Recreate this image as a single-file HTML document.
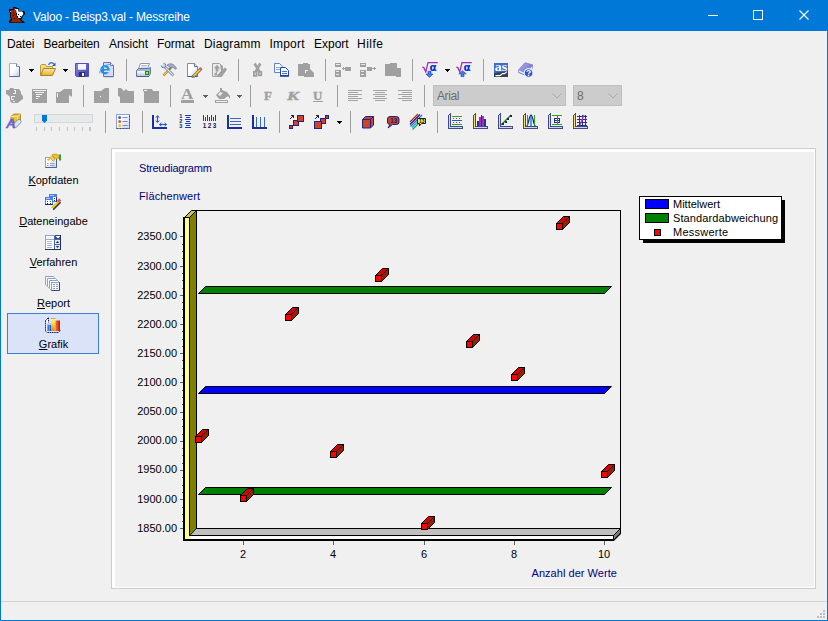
<!DOCTYPE html>
<html lang="de">
<head>
<meta charset="utf-8">
<title>Valoo - Beisp3.val - Messreihe</title>
<style>
html,body{margin:0;padding:0;}
body{width:828px;height:621px;overflow:hidden;background:#f0f0f0;font-family:"Liberation Sans",sans-serif;}
#win{position:absolute;left:0;top:0;width:828px;height:621px;background:#f0f0f0;overflow:hidden;}
#win div,#win span{position:absolute;white-space:nowrap;}
#titlebar{left:0;top:0;width:828px;height:31px;background:#0078d7;}
#title{left:33px;top:8.5px;font-size:12px;line-height:16px;color:#fff;letter-spacing:-0.17px;}
.bl{background:#0078d7;}
.menu{top:36px;font-size:12px;line-height:16px;color:#000;}
.sep{width:1px;height:22px;background:#a0a0a0;}
.side{font-size:11px;line-height:14px;color:#000;text-align:center;left:0;width:107px;}
.side u{text-decoration:underline;}
.ct{font-size:11px;line-height:14px;color:#000080;}
.yl{font-size:11px;line-height:14px;color:#000;left:120px;width:57px;text-align:right;}
.xl{font-size:11px;line-height:14px;color:#000;width:40px;text-align:center;top:547px;}
.lg{font-size:11px;line-height:14px;color:#000;left:673px;}
.combo{background:#ccc;border:1px solid #bfbfbf;box-sizing:border-box;height:21px;top:85px;}
.combo span{left:3px;top:2px;font-size:12px;line-height:16px;color:#6d6d6d;letter-spacing:-0.4px;}
#gfx{position:absolute;left:0;top:0;}
</style>
</head>
<body>
<div id="win">
<!-- title bar -->
<div id="titlebar"></div>
<div id="title">Valoo - Beisp3.val - Messreihe</div>
<!-- window borders -->
<div class="bl" style="left:0;top:0;width:1px;height:621px"></div>
<div class="bl" style="left:827px;top:0;width:1px;height:621px"></div>
<div class="bl" style="left:0;top:620px;width:828px;height:1px"></div>
<!-- menu -->
<div class="menu" style="left:7px;letter-spacing:-0.15px">Datei</div>
<div class="menu" style="left:43.5px;letter-spacing:-0.2px">Bearbeiten</div>
<div class="menu" style="left:109px;letter-spacing:-0.05px">Ansicht</div>
<div class="menu" style="left:157px;letter-spacing:-0.1px">Format</div>
<div class="menu" style="left:204px;letter-spacing:0.15px">Diagramm</div>
<div class="menu" style="left:269.5px;letter-spacing:0.2px">Import</div>
<div class="menu" style="left:314px">Export</div>
<div class="menu" style="left:357px;letter-spacing:0.5px">Hilfe</div>
<!-- toolbar separators row1 -->
<div class="sep" style="left:126px;top:59px"></div>
<div class="sep" style="left:238px;top:59px"></div>
<div class="sep" style="left:325px;top:59px"></div>
<div class="sep" style="left:412px;top:59px"></div>
<div class="sep" style="left:483px;top:59px"></div>
<!-- row2 -->
<div class="sep" style="left:83px;top:85px"></div>
<div class="sep" style="left:170px;top:85px"></div>
<div class="sep" style="left:250px;top:85px"></div>
<div class="sep" style="left:337px;top:85px"></div>
<div class="sep" style="left:424px;top:85px"></div>
<!-- row3 -->
<div class="sep" style="left:105px;top:111px"></div>
<div class="sep" style="left:142px;top:111px"></div>
<div class="sep" style="left:279px;top:111px"></div>
<div class="sep" style="left:350px;top:111px"></div>
<div class="sep" style="left:437px;top:111px"></div>
<!-- combos -->
<div class="combo" style="left:433px;width:133px"><span>Arial</span></div>
<div class="combo" style="left:573px;width:49px"><span>8</span></div>
<!-- sidebar -->
<div style="left:7px;top:313px;width:92px;height:41px;box-sizing:border-box;border:1px solid #3d7bdc;background:#dae3f8"></div>
<div class="side" style="top:173px"><u>K</u>opfdaten</div>
<div class="side" style="top:214px"><u>D</u>ateneingabe</div>
<div class="side" style="top:255px"><u>V</u>erfahren</div>
<div class="side" style="top:296px"><u>R</u>eport</div>
<div class="side" style="top:337px"><u>G</u>rafik</div>
<!-- panel frame -->
<div style="left:111px;top:148px;width:705px;height:441px;box-sizing:border-box;border:1px solid #cdcdcd;"></div>
<div style="left:112px;top:149px;width:703px;height:439px;box-sizing:border-box;border-left:3px solid #fff;border-top:3px solid #fff;border-right:1px solid #fff;border-bottom:1px solid #fff;"></div>
<!-- status bar -->
<div style="left:1px;top:601px;width:826px;height:1px;background:#d0d0d0"></div>
<!-- chart text -->
<div class="ct" style="left:139px;top:161px;letter-spacing:-0.2px">Streudiagramm</div>
<div class="ct" style="left:139px;top:189px;letter-spacing:0.12px">Flächenwert</div>
<div class="ct" style="left:531.5px;top:566px;letter-spacing:0.04px">Anzahl der Werte</div>
<div class="yl" style="top:229px">2350.00</div>
<div class="yl" style="top:259px">2300.00</div>
<div class="yl" style="top:288px">2250.00</div>
<div class="yl" style="top:317px">2200.00</div>
<div class="yl" style="top:346px">2150.00</div>
<div class="yl" style="top:375px">2100.00</div>
<div class="yl" style="top:404px">2050.00</div>
<div class="yl" style="top:433px">2000.00</div>
<div class="yl" style="top:462px">1950.00</div>
<div class="yl" style="top:492px">1900.00</div>
<div class="yl" style="top:521px">1850.00</div>
<div class="xl" style="left:223px">2</div>
<div class="xl" style="left:313px">4</div>
<div class="xl" style="left:404px">6</div>
<div class="xl" style="left:494px">8</div>
<div class="xl" style="left:584px">10</div>
<!-- GFX -->
<svg id="gfx" width="828" height="621" viewBox="0 0 828 621">
<!--CHART-->
<g shape-rendering="crispEdges">
<rect x="196" y="210" width="425" height="1" fill="#000"/>
<rect x="620" y="210" width="1" height="324" fill="#000"/>
<rect x="196" y="210" width="1" height="319" fill="#000"/>
<rect x="196" y="528" width="425" height="1" fill="#000"/>
<polygon points="197,529 620,529 613,536 190,536" fill="#c0c0c0"/>
<rect x="190" y="536" width="423" height="3" fill="#fff"/>
<rect x="189" y="535" width="425" height="1" fill="#000"/>
<rect x="183" y="539" width="431" height="2" fill="#000"/>
<rect x="613" y="535" width="1" height="5" fill="#000"/>
<polygon points="614,535 620,529 620,534 614,540" fill="#808080"/>
<rect x="183" y="217" width="2" height="324" fill="#000"/>
<rect x="185" y="218" width="4" height="321" fill="#ffff80"/>
<rect x="183" y="217" width="7" height="1" fill="#000"/>
<rect x="189" y="217" width="1" height="319" fill="#000"/>
<polygon points="190,217 196,211 196,529 190,535" fill="#808000"/>
</g>
<polygon points="184.5,217.5 191.5,210.5 196.5,210.5 189.5,217.5" fill="#ccc040" stroke="#000" stroke-width="1"/>
<line x1="613.5" y1="540.5" x2="620.5" y2="533.5" stroke="#000" stroke-width="1.2"/>
<line x1="613.5" y1="535.5" x2="620.5" y2="528.5" stroke="#000" stroke-width="1"/>
<line x1="190" y1="535.5" x2="196.5" y2="528.5" stroke="#000" stroke-width="1"/>
<g shape-rendering="crispEdges" fill="#606068">
<rect x="180" y="236" width="3" height="1"/>
<rect x="182" y="244" width="1" height="1"/>
<rect x="182" y="251" width="1" height="1"/>
<rect x="182" y="258" width="1" height="1"/>
<rect x="180" y="266" width="3" height="1"/>
<rect x="182" y="273" width="1" height="1"/>
<rect x="182" y="280" width="1" height="1"/>
<rect x="182" y="288" width="1" height="1"/>
<rect x="180" y="295" width="3" height="1"/>
<rect x="182" y="302" width="1" height="1"/>
<rect x="182" y="309" width="1" height="1"/>
<rect x="182" y="317" width="1" height="1"/>
<rect x="180" y="324" width="3" height="1"/>
<rect x="182" y="331" width="1" height="1"/>
<rect x="182" y="339" width="1" height="1"/>
<rect x="182" y="346" width="1" height="1"/>
<rect x="180" y="353" width="3" height="1"/>
<rect x="182" y="360" width="1" height="1"/>
<rect x="182" y="368" width="1" height="1"/>
<rect x="182" y="375" width="1" height="1"/>
<rect x="180" y="382" width="3" height="1"/>
<rect x="182" y="390" width="1" height="1"/>
<rect x="182" y="397" width="1" height="1"/>
<rect x="182" y="404" width="1" height="1"/>
<rect x="180" y="412" width="3" height="1"/>
<rect x="182" y="419" width="1" height="1"/>
<rect x="182" y="426" width="1" height="1"/>
<rect x="182" y="434" width="1" height="1"/>
<rect x="180" y="441" width="3" height="1"/>
<rect x="182" y="448" width="1" height="1"/>
<rect x="182" y="455" width="1" height="1"/>
<rect x="182" y="463" width="1" height="1"/>
<rect x="180" y="470" width="3" height="1"/>
<rect x="182" y="477" width="1" height="1"/>
<rect x="182" y="485" width="1" height="1"/>
<rect x="182" y="492" width="1" height="1"/>
<rect x="180" y="499" width="3" height="1"/>
<rect x="182" y="507" width="1" height="1"/>
<rect x="182" y="514" width="1" height="1"/>
<rect x="182" y="521" width="1" height="1"/>
<rect x="180" y="528" width="3" height="1"/>
<rect x="243" y="541" width="1" height="4"/>
<rect x="333" y="541" width="1" height="4"/>
<rect x="424" y="541" width="1" height="4"/>
<rect x="514" y="541" width="1" height="4"/>
<rect x="604" y="541" width="1" height="4"/>
</g>
<polygon points="198.5,293.5 205.5,286.5 611.5,286.5 604.5,293.5" fill="#008000" stroke="#000" stroke-width="1"/>
<polygon points="198.5,393.5 205.5,386.5 611.5,386.5 604.5,393.5" fill="#0000ff" stroke="#000" stroke-width="1"/>
<polygon points="198.5,494.5 205.5,487.5 611.5,487.5 604.5,494.5" fill="#008000" stroke="#000" stroke-width="1"/>
<g stroke="#000" stroke-width="1" stroke-linejoin="miter"><polygon points="195.5,436.5 202.5,429.5 208.5,429.5 201.5,436.5" fill="#d80000"/><polygon points="201.5,436.5 208.5,429.5 208.5,435.5 201.5,442.5" fill="#982000"/><rect x="195.5" y="436.5" width="6" height="6" fill="#ff0000"/></g>
<g stroke="#000" stroke-width="1" stroke-linejoin="miter"><polygon points="240.5,495.5 247.5,488.5 253.5,488.5 246.5,495.5" fill="#d80000"/><polygon points="246.5,495.5 253.5,488.5 253.5,494.5 246.5,501.5" fill="#982000"/><rect x="240.5" y="495.5" width="6" height="6" fill="#ff0000"/></g>
<g stroke="#000" stroke-width="1" stroke-linejoin="miter"><polygon points="285.5,314.5 292.5,307.5 298.5,307.5 291.5,314.5" fill="#d80000"/><polygon points="291.5,314.5 298.5,307.5 298.5,313.5 291.5,320.5" fill="#982000"/><rect x="285.5" y="314.5" width="6" height="6" fill="#ff0000"/></g>
<g stroke="#000" stroke-width="1" stroke-linejoin="miter"><polygon points="330.5,451.5 337.5,444.5 343.5,444.5 336.5,451.5" fill="#d80000"/><polygon points="336.5,451.5 343.5,444.5 343.5,450.5 336.5,457.5" fill="#982000"/><rect x="330.5" y="451.5" width="6" height="6" fill="#ff0000"/></g>
<g stroke="#000" stroke-width="1" stroke-linejoin="miter"><polygon points="375.5,275.5 382.5,268.5 388.5,268.5 381.5,275.5" fill="#d80000"/><polygon points="381.5,275.5 388.5,268.5 388.5,274.5 381.5,281.5" fill="#982000"/><rect x="375.5" y="275.5" width="6" height="6" fill="#ff0000"/></g>
<g stroke="#000" stroke-width="1" stroke-linejoin="miter"><polygon points="421.5,523.5 428.5,516.5 434.5,516.5 427.5,523.5" fill="#d80000"/><polygon points="427.5,523.5 434.5,516.5 434.5,522.5 427.5,529.5" fill="#982000"/><rect x="421.5" y="523.5" width="6" height="6" fill="#ff0000"/></g>
<g stroke="#000" stroke-width="1" stroke-linejoin="miter"><polygon points="466.5,341.5 473.5,334.5 479.5,334.5 472.5,341.5" fill="#d80000"/><polygon points="472.5,341.5 479.5,334.5 479.5,340.5 472.5,347.5" fill="#982000"/><rect x="466.5" y="341.5" width="6" height="6" fill="#ff0000"/></g>
<g stroke="#000" stroke-width="1" stroke-linejoin="miter"><polygon points="511.5,374.5 518.5,367.5 524.5,367.5 517.5,374.5" fill="#d80000"/><polygon points="517.5,374.5 524.5,367.5 524.5,373.5 517.5,380.5" fill="#982000"/><rect x="511.5" y="374.5" width="6" height="6" fill="#ff0000"/></g>
<g stroke="#000" stroke-width="1" stroke-linejoin="miter"><polygon points="556.5,223.5 563.5,216.5 569.5,216.5 562.5,223.5" fill="#d80000"/><polygon points="562.5,223.5 569.5,216.5 569.5,222.5 562.5,229.5" fill="#982000"/><rect x="556.5" y="223.5" width="6" height="6" fill="#ff0000"/></g>
<g stroke="#000" stroke-width="1" stroke-linejoin="miter"><polygon points="601.5,471.5 608.5,464.5 614.5,464.5 607.5,471.5" fill="#d80000"/><polygon points="607.5,471.5 614.5,464.5 614.5,470.5 607.5,477.5" fill="#982000"/><rect x="601.5" y="471.5" width="6" height="6" fill="#ff0000"/></g>
<g shape-rendering="crispEdges">
<rect x="643" y="200" width="142" height="43" fill="#000"/>
<rect x="639" y="196" width="143" height="44" fill="#000"/>
<rect x="640" y="197" width="141" height="42" fill="#fff"/>
<rect x="645" y="199" width="24" height="10" fill="#000"/><rect x="646" y="200" width="22" height="8" fill="#0000ff"/>
<rect x="645" y="213" width="24" height="10" fill="#000"/><rect x="646" y="214" width="22" height="8" fill="#008000"/>
<rect x="654" y="229" width="7" height="7" fill="#000"/><rect x="655" y="230" width="5" height="5" fill="#ff0000"/>
</g>
<!--/CHART-->
<!--ICONS-->
<defs>
<linearGradient id="gPage" x1="0" y1="0" x2="1" y2="1"><stop offset="0.45" stop-color="#ffffff"/><stop offset="1" stop-color="#bccbea"/></linearGradient>
<linearGradient id="gFold" x1="0" y1="0" x2="0" y2="1"><stop offset="0" stop-color="#fbe9a0"/><stop offset="1" stop-color="#e6b030"/></linearGradient>
<linearGradient id="gSave" x1="0" y1="0" x2="1" y2="1"><stop offset="0" stop-color="#8888ec"/><stop offset="1" stop-color="#3c3cb0"/></linearGradient>
<linearGradient id="gBook" x1="0" y1="0" x2="1" y2="1"><stop offset="0" stop-color="#b4b4f4"/><stop offset="1" stop-color="#5c5cc4"/></linearGradient>
<linearGradient id="gLst" x1="0" y1="0" x2="1" y2="1"><stop offset="0" stop-color="#ffffff"/><stop offset="1" stop-color="#9cb4e8"/></linearGradient>
<linearGradient id="gPrn" x1="0" y1="0" x2="0" y2="1"><stop offset="0" stop-color="#ffffff"/><stop offset="1" stop-color="#b8c4dc"/></linearGradient>
<linearGradient id="gFrm" x1="0" y1="0" x2="1" y2="1"><stop offset="0.3" stop-color="#ffffff"/><stop offset="1" stop-color="#c4d4f4"/></linearGradient>
<g id="dd"><rect x="0" y="0" width="5" height="1"/><rect x="1" y="1" width="3" height="1"/><rect x="2" y="2" width="1" height="1"/></g>
<g id="axL" shape-rendering="crispEdges"><rect x="0" y="2" width="1" height="14" fill="#404888"/><rect x="1" y="1" width="1" height="14" fill="#f4e070"/><rect x="2" y="0" width="1" height="14" fill="#404888"/><rect x="1" y="1" width="1" height="1" fill="#404888"/><rect x="2" y="13" width="12" height="1" fill="#404888"/><rect x="2" y="14" width="12" height="1" fill="#c4d8f8"/><rect x="0" y="15" width="15" height="1" fill="#404888"/><rect x="14" y="13" width="1" height="3" fill="#404888"/></g>
</defs>
<!-- ROW 1 -->
<!-- new doc -->
<g transform="translate(9,63)">
<path d="M0.5,0.5 H7.5 L10.5,3.5 V13.5 H0.5 Z" fill="url(#gPage)" stroke="#a4b0d0" stroke-width="1"/>
<path d="M7.5,0.5 V3.5 H10.5" fill="#eef2fb" stroke="#7484b0" stroke-width="1"/>
<path d="M0.5,13.5 H10.5 V4" fill="none" stroke="#5868a0" stroke-width="1"/>
</g>
<use href="#dd" x="29" y="69" fill="#000" shape-rendering="crispEdges"/>
<!-- open folder -->
<g transform="translate(40,62)">
<path d="M0.5,13.5 V3.5 L1.5,2.5 H5.5 L6.5,4.5 H12.5 V6.5" fill="#f4dc84" stroke="#b89838" stroke-width="1"/>
<path d="M0.7,13.5 L3.5,6.5 H15.5 L12.5,13.5 Z" fill="url(#gFold)" stroke="#a8842c" stroke-width="1"/>
<path d="M8.5,3 C9.5,0.5 12.5,0 14,2" fill="none" stroke="#4878d0" stroke-width="1.4"/>
<path d="M15.5,0.5 V4 H12 Z" fill="#3058c0"/>
</g>
<use href="#dd" x="63" y="69" fill="#000" shape-rendering="crispEdges"/>
<!-- save -->
<g transform="translate(75,63)">
<path d="M0.5,0.5 H13.5 V13.5 H1.5 L0.5,12.5 Z" fill="url(#gSave)" stroke="#5050c0" stroke-width="1"/>
<rect x="3" y="1" width="8" height="6" fill="#f4f6ff"/>
<rect x="3" y="6" width="8" height="1" fill="#c0c8f0"/>
<rect x="4" y="9" width="6" height="5" fill="#303068"/>
<rect x="7" y="10" width="2" height="3" fill="#f0f0ff"/>
</g>
<!-- IE doc -->
<g transform="translate(99,62)">
<path d="M5.5,2.5 H14.5 V15.5 H5.5 Z" fill="#8088b0" opacity="0.55"/>
<path d="M4.5,0.5 H11.5 L14.5,3.5 V14.5 H4.5 Z" fill="#d4dcf6" stroke="#6474b4" stroke-width="1"/>
<path d="M11.5,0.5 V3.5 H14.5" fill="#f0f4ff" stroke="#6474b4" stroke-width="1"/>
<circle cx="6" cy="7.8" r="3.6" fill="none" stroke="#1e8ce0" stroke-width="2.2"/>
<rect x="3" y="7" width="7" height="1.6" fill="#1e8ce0"/>
<rect x="7" y="8.6" width="4" height="1.6" fill="#d4dcf6"/>
<path d="M0.8,11.5 C0,8 6,2 11.5,2.5" fill="none" stroke="#40a8f0" stroke-width="1"/>
</g>
<!-- printer -->
<g transform="translate(136,63)">
<path d="M4.5,0.5 H13.5 L11.5,5.5 H2.5 Z" fill="#fbfbfe" stroke="#8c98b8" stroke-width="1"/>
<path d="M5.5,2.5 H11.5 M4.8,4 H10.8" stroke="#b8c0d4" stroke-width="1"/>
<path d="M0.5,7.5 L2.5,5.5 H12.5 L14.5,4.5 V10.5 L12.5,13.5 H0.5 Z" fill="#a4b4d4" stroke="#6474a4" stroke-width="1"/>
<rect x="1" y="8" width="12" height="5" fill="url(#gPrn)"/>
<rect x="9" y="8" width="4" height="4" fill="#188828"/>
<rect x="10" y="9" width="2" height="2" fill="#a0f040"/>
<rect x="1" y="13" width="12" height="1" fill="#4c5c94"/>
</g>
<!-- tools -->
<g transform="translate(161,63)">
<path d="M2.5,12.5 L11,3.5" stroke="#a07818" stroke-width="2.4"/>
<path d="M2.8,12.2 L7,7.8" stroke="#f0c030" stroke-width="1.4"/>
<path d="M6,2.2 C9,-0.5 13.5,1 15.5,5.5 L13.8,6.2 C13,4 11.5,3.4 10,4.5 Z" fill="#a8b4d0" stroke="#6878a0" stroke-width="0.8"/>
<path d="M3,3 L12.5,12.5" stroke="#6878a0" stroke-width="2.6"/>
<path d="M3,3 L12.5,12.5" stroke="#dce4f4" stroke-width="1.2"/>
<circle cx="2.6" cy="2.6" r="2.2" fill="#c8d0e4" stroke="#6878a0" stroke-width="0.9"/>
<rect x="0" y="0" width="2.4" height="2.4" fill="#f0f0f0"/>
</g>
<!-- doc + pencil -->
<g transform="translate(187,63)">
<path d="M0.5,0.5 H7.5 L10.5,3.5 V13.5 H0.5 Z" fill="url(#gPage)" stroke="#7c8cb8" stroke-width="1"/>
<path d="M7.5,0.5 V3.5 H10.5" fill="#e8eefa" stroke="#5a6a9c" stroke-width="1"/>
<path d="M0.5,13.5 H10.5" fill="none" stroke="#44558c" stroke-width="1"/>
<path d="M6.2,13.8 L14.2,5.4" stroke="#484848" stroke-width="3.1"/>
<path d="M6.2,13.6 L13.2,6.2" stroke="#f0c838" stroke-width="2"/>
<path d="M12.6,6.8 L14.4,4.9" stroke="#e07060" stroke-width="2.4"/>
<path d="M5,14.6 L5.6,12.6 L7,14 Z" fill="#f8e8c0" stroke="#303030" stroke-width="0.5"/>
</g>
<!-- disabled export (gray) -->
<g transform="translate(212,63)" fill="#a0a0a0">
<path d="M0.5,0.5 H7.5 L9.5,2.5 V13.5 H0.5 Z" fill="#ececec" stroke="#a0a0a0" stroke-width="1"/>
<path d="M5,1.8 L8.2,5.6 H6.4 V8.5 H3.6 V5.6 H1.8 Z"/>
<path d="M2,11.5 L4.5,8.5 L7,9.5 L4,13 Z"/>
<path d="M8,1 L11,3 V6.2 L13,4.6 L15,6.6 L10,13.6 L6.5,14.2 L5,12.2 L9,8 Z"/>
<rect x="5" y="9" width="2" height="2" fill="#ececec"/>
</g>
<!-- scissors gray -->
<g transform="translate(253,63)" fill="none" stroke="#a0a0a0">
<path d="M1.6,0.5 L6.4,8.6 M7.4,0.5 L2.6,8.6" stroke-width="2.6"/>
<rect x="0.9" y="8.9" width="2.6" height="4" stroke-width="1.8"/>
<rect x="5.7" y="8.9" width="2.6" height="3.4" stroke-width="1.8"/>
</g>
<!-- copy -->
<g transform="translate(274,63)">
<path d="M0.5,0.5 H5.5 L8.5,3.5 V9.5 H0.5 Z" fill="#f4f8ff" stroke="#6080c8" stroke-width="1"/>
<path d="M2,4.5 H6 M2,6.5 H6" stroke="#88a4e0" stroke-width="1"/>
<path d="M6.5,4.5 H11.5 L14.5,7.5 V13 H6.5 Z" fill="#f4f8ff" stroke="#2848a8" stroke-width="1"/>
<path d="M8,8.5 H13 M8,10.5 H13" stroke="#4870d0" stroke-width="1"/>
<rect x="6" y="12" width="9" height="1.6" fill="#2040a0"/>
</g>
<!-- paste gray -->
<g transform="translate(298,63)" fill="#a0a0a0">
<path d="M0,1 H5 V0 H10 V1 H12 V6 L16,10 V14 H6 V13 H0 Z"/>
<rect x="7" y="7" width="3" height="1" fill="#f0f0f0"/><rect x="7" y="7" width="1" height="3" fill="#f0f0f0"/>
</g>
<!-- gray A : insert -->
<g transform="translate(335,63)" fill="#a0a0a0" shape-rendering="crispEdges">
<rect x="0" y="0" width="6" height="4"/><rect x="1" y="1" width="4" height="1" fill="#e8e8e8"/>
<rect x="0" y="7" width="6" height="7"/><rect x="1" y="8" width="3" height="1" fill="#e8e8e8"/><rect x="1" y="11" width="3" height="1" fill="#e8e8e8"/>
<rect x="10" y="4" width="6" height="4"/><rect x="7" y="5" width="3" height="1"/><rect x="8" y="4" width="1" height="3"/>
</g>
<!-- gray B -->
<g transform="translate(360,63)" fill="#a0a0a0" shape-rendering="crispEdges">
<rect x="0" y="0" width="6" height="4"/><rect x="1" y="1" width="4" height="1" fill="#e8e8e8"/>
<rect x="0" y="7" width="6" height="7"/><rect x="1" y="8" width="3" height="1" fill="#e8e8e8"/><rect x="1" y="11" width="3" height="1" fill="#e8e8e8"/>
<rect x="7" y="4" width="5" height="4"/><rect x="12" y="5" width="4" height="1"/><rect x="14" y="4" width="1" height="3"/>
</g>
<!-- gray C -->
<g transform="translate(385,63)" fill="#a0a0a0">
<path d="M0,1 H5 V0 H12 V5 H16 V14 H11 V13 H0 Z"/>
</g>
<!-- sqrt alpha 1 -->
<g transform="translate(422,62)">
<path d="M0.3,5.2 L1.8,5.6 L3.8,9.8 L6,0.6 H15.8" fill="none" stroke="#a030b0" stroke-width="1.3"/>
<text x="7.6" y="8.8" font-family="'DejaVu Sans','Liberation Sans',sans-serif" font-size="10.5" font-weight="bold" fill="#0030d0">α</text>
<path d="M6,9.3 H9 V12 H11 L7.5,15.4 L4,12 H6 Z" fill="#4878e8" stroke="#1840b8" stroke-width="0.6"/>
</g>
<use href="#dd" x="445" y="69" fill="#000" shape-rendering="crispEdges"/>
<!-- sqrt alpha 2 -->
<g transform="translate(456,62)">
<path d="M0.3,5.2 L1.8,5.6 L3.8,9.8 L6,0.6 H15.8" fill="none" stroke="#a030b0" stroke-width="1.3"/>
<text x="7.6" y="8.8" font-family="'DejaVu Sans','Liberation Sans',sans-serif" font-size="10.5" font-weight="bold" fill="#0030d0">α</text>
<path d="M6.5,8.8 L10.2,11.8 H8 V14.6 H5 V11.8 H2.8 Z" fill="#4878e8" stroke="#1840b8" stroke-width="0.6"/>
</g>
<!-- as -->
<g transform="translate(494,63)">
<rect x="0" y="0" width="14" height="14" fill="#3c6ccc"/>
<path d="M0,10 L14,8 V14 H0 Z" fill="#384058"/>
<text x="0.8" y="7.6" font-family="'Liberation Serif',serif" font-size="13" font-weight="bold" fill="#fff" textLength="12.4" lengthAdjust="spacingAndGlyphs">as</text>
<path d="M1.5,12.6 H6 L8.5,10.6 H10.5 L13,8.6" fill="none" stroke="#fff" stroke-width="1.2"/>
</g>
<!-- help book -->
<g transform="translate(518,62)">
<path d="M0.5,8 L7,0.8 L14.5,2.8 V6 L8,13.5 L0.5,10.5 Z" fill="url(#gBook)" stroke="#7878d0" stroke-width="0.8"/>
<path d="M0.8,9.2 L8,12.2 L14.2,5.2" fill="none" stroke="#eef0ff" stroke-width="1.4"/>
<circle cx="10.6" cy="11" r="4.4" fill="#2c50c8" stroke="#e8f0ff" stroke-width="1.2"/>
<text x="8.1" y="14.2" font-family="'Liberation Sans',sans-serif" font-size="8.5" font-weight="bold" fill="#fff">?</text>
</g>
<!-- ROW 2 (disabled) -->
<g fill="#a0a0a0">
<path d="M6,90 H9 L10,88 H13 L14,89 H19 L21,92 V94 L23,96 V99 L20,101 L18,103 H12 L10,101 V97 L8,95 L6,94 Z"/>
<g fill="#f0f0f0" shape-rendering="crispEdges"><rect x="14" y="90" width="2" height="1"/><rect x="15" y="91" width="1" height="2"/><rect x="13" y="93" width="3" height="1"/><rect x="11" y="96" width="4" height="1"/><rect x="11" y="97" width="1" height="3"/><rect x="11" y="99" width="3" height="1"/><rect x="13" y="101" width="2" height="1"/></g>
<rect x="32" y="89" width="15" height="14" shape-rendering="crispEdges"/>
<g fill="#f4f4f4" shape-rendering="crispEdges"><rect x="33" y="90" width="13" height="1"/><rect x="35" y="92" width="9" height="1"/><rect x="36" y="94" width="6" height="1"/><rect x="36" y="96" width="4" height="1"/><rect x="36" y="98" width="2" height="1"/></g>
<path d="M56,92 H60 L64,89 H72 V97 L69,95 V103 H56 Z"/>
<rect x="57" y="93" width="1" height="4" fill="#f4f4f4" shape-rendering="crispEdges"/>
<path d="M94,91 H101 L105,88 H109 V103 H94 Z"/>
<rect x="100" y="96" width="1" height="1" fill="#f4f4f4"/>
<path d="M118,88 H121 L124,91 L126,89 L128,91 H134 V103 H120 V97 L118,96 Z"/>
<path d="M143,89 H152 L153,91 H159 V103 H144 V92 L143,91 Z"/>
<rect x="144" y="90" width="3" height="1" fill="#f4f4f4"/>
</g>
<!-- A underline -->
<text x="181" y="98.5" font-family="'Liberation Serif',serif" font-size="15" font-weight="bold" fill="#a0a0a0" textLength="12.5" lengthAdjust="spacingAndGlyphs">A</text>
<rect x="181" y="100" width="13" height="3" fill="#a0a0a0" shape-rendering="crispEdges"/>
<use href="#dd" x="203" y="95" fill="#606060" shape-rendering="crispEdges"/>
<!-- paint bucket -->
<g transform="translate(215,88)" fill="#a0a0a0">
<path d="M5,0 H7 V2 L12,4 L15,8 V11 L13,8 L9,11 H4 L1,7 L5,3 Z"/>
<path d="M5,4 L8,5 L5,8 L3,7 Z" fill="#ececec"/>
<rect x="0.5" y="12.5" width="12" height="2" fill="#f4f4f4" stroke="#a0a0a0" stroke-width="1"/>
</g>
<use href="#dd" x="237" y="95" fill="#606060" shape-rendering="crispEdges"/>
<!-- F K U -->
<text x="264" y="100" font-family="'Liberation Serif',serif" font-size="13" font-weight="bold" fill="#a0a0a0" stroke="#a0a0a0" stroke-width="0.4">F</text>
<text x="287" y="100" font-family="'Liberation Serif',serif" font-size="13" font-weight="bold" font-style="italic" fill="#a0a0a0" stroke="#a0a0a0" stroke-width="0.4" textLength="12" lengthAdjust="spacingAndGlyphs">K</text>
<text x="313" y="100" font-family="'Liberation Serif',serif" font-size="13" font-weight="bold" fill="#a0a0a0" stroke="#a0a0a0" stroke-width="0.4">U</text>
<rect x="313" y="101" width="10" height="1" fill="#a0a0a0" shape-rendering="crispEdges"/>
<!-- align -->
<g fill="#a4a4a4" shape-rendering="crispEdges">
<rect x="348" y="90" width="14" height="1"/><rect x="348" y="92" width="10" height="1"/><rect x="348" y="94" width="14" height="1"/><rect x="348" y="96" width="10" height="1"/><rect x="348" y="98" width="14" height="1"/><rect x="348" y="100" width="10" height="1"/>
<rect x="373" y="90" width="14" height="1"/><rect x="375" y="92" width="10" height="1"/><rect x="373" y="94" width="14" height="1"/><rect x="375" y="96" width="10" height="1"/><rect x="373" y="98" width="14" height="1"/><rect x="375" y="100" width="10" height="1"/>
<rect x="398" y="90" width="14" height="1"/><rect x="402" y="92" width="10" height="1"/><rect x="398" y="94" width="14" height="1"/><rect x="402" y="96" width="10" height="1"/><rect x="398" y="98" width="14" height="1"/><rect x="402" y="100" width="10" height="1"/>
</g>
<!-- combo chevrons -->
<path d="M552.5,93.5 L557,98 L561.5,93.5" fill="none" stroke="#a8a8a8" stroke-width="1"/>
<path d="M608.5,93.5 L613,98 L617.5,93.5" fill="none" stroke="#a8a8a8" stroke-width="1"/>
<!-- ROW 3 -->
<!-- 3D objects -->
<g transform="translate(6,113)">
<path d="M5,3.5 L8,1 H14.5 V7 L11.5,9.5 H5 Z" fill="#e8c040" stroke="#a07c18" stroke-width="0.8"/>
<path d="M5,3.5 H11.5 V9.5 M11.5,3.5 L14.5,1" fill="none" stroke="#fff0a0" stroke-width="0.8"/>
<path d="M9,12.5 L13,8.5" stroke="#8890a0" stroke-width="5" stroke-linecap="round"/>
<path d="M9,12.5 L13,8.5" stroke="#e0e4ec" stroke-width="3.4" stroke-linecap="round"/>
<text x="0" y="14.6" font-family="'Liberation Sans',sans-serif" font-size="13.5" font-weight="bold" font-style="italic" fill="#7868d4" stroke="#5040a8" stroke-width="0.3">A</text>
</g>
<!-- slider -->
<rect x="34.5" y="114.5" width="58" height="8" fill="#e7eaea" stroke="#d6d6d6" stroke-width="1"/>
<path d="M42,115 H47 V120.5 L44.5,123 L42,120.5 Z" fill="#0078d7"/>
<g fill="#c4c4c4" shape-rendering="crispEdges"><rect x="36" y="127" width="1" height="4"/><rect x="44" y="127" width="1" height="4"/><rect x="51" y="127" width="1" height="4"/><rect x="59" y="127" width="1" height="4"/><rect x="67" y="127" width="1" height="4"/><rect x="74" y="127" width="1" height="4"/><rect x="82" y="127" width="1" height="4"/><rect x="89" y="127" width="2" height="4"/></g>
<!-- legend list icon -->
<g transform="translate(116,114)">
<rect x="0.5" y="0.5" width="13" height="14" fill="url(#gFrm)" stroke="#8ca0d4" stroke-width="1"/>
<path d="M0.5,14.5 H13.5 V0.5" fill="none" stroke="#405088" stroke-width="1" stroke-dasharray="2,1"/>
<circle cx="3.6" cy="3.6" r="1.5" fill="#4060e0"/><circle cx="3.6" cy="7.5" r="1.5" fill="#e06030"/><circle cx="3.6" cy="11.4" r="1.5" fill="#f0c830"/>
<path d="M6.5,3.5 H11.5 M6.5,7.5 H11.5 M6.5,11.5 H11.5" stroke="#7c88b8" stroke-width="1"/>
</g>
<!-- axes icon -->
<g transform="translate(152,115)">
<path d="M1,0 V13 H15" fill="none" stroke="#1830a0" stroke-width="2" shape-rendering="crispEdges"/>
<path d="M5.5,1 V7" stroke="#2858d8" stroke-width="1.2"/><path d="M3.8,2.6 L5.5,0.6 L7.2,2.6 M3.8,5.6 L5.5,7.6 L7.2,5.6" fill="none" stroke="#2858d8" stroke-width="1"/>
<path d="M7.5,9.5 H14.5" stroke="#2858d8" stroke-width="1.2"/><path d="M9.4,7.8 L7.4,9.5 L9.4,11.2 M12.6,7.8 L14.6,9.5 L12.6,11.2" fill="none" stroke="#2858d8" stroke-width="1"/>
</g>
<!-- 123 vertical + lines -->
<g transform="translate(179,114)">
<text x="0.3" y="4.3999999999999995" font-family="'Liberation Sans',sans-serif" font-size="5.6" font-weight="bold" fill="#101850">1</text>
<text x="0.3" y="9.4" font-family="'Liberation Sans',sans-serif" font-size="5.6" font-weight="bold" fill="#101850">2</text>
<text x="0.3" y="14.4" font-family="'Liberation Sans',sans-serif" font-size="5.6" font-weight="bold" fill="#101850">3</text>
<g fill="#1838c0" shape-rendering="crispEdges"><rect x="6" y="1" width="6" height="1"/><rect x="7" y="3" width="4" height="1"/><rect x="6" y="5" width="6" height="1"/><rect x="7" y="7" width="4" height="1"/><rect x="6" y="9" width="6" height="1"/><rect x="7" y="11" width="4" height="1"/><rect x="6" y="13" width="6" height="1"/></g>
</g>
<!-- ticks + 123 -->
<g transform="translate(203,115)">
<g fill="#1838c0" shape-rendering="crispEdges"><rect x="0" y="0" width="1" height="6"/><rect x="2" y="2" width="1" height="4"/><rect x="4" y="0" width="1" height="6"/><rect x="6" y="2" width="1" height="4"/><rect x="8" y="0" width="1" height="6"/><rect x="10" y="2" width="1" height="4"/><rect x="12" y="0" width="1" height="6"/></g>
<text x="-0.3" y="13.4" font-family="'Liberation Sans',sans-serif" font-size="6.4" font-weight="bold" fill="#101850" textLength="13.6" lengthAdjust="spacing">123</text>
</g>
<!-- hgrid -->
<g transform="translate(227,115)">
<path d="M1,0 V13 H15" fill="none" stroke="#1830a0" stroke-width="2" shape-rendering="crispEdges"/>
<g fill="#3c68c8" shape-rendering="crispEdges"><rect x="3" y="3" width="11" height="1"/><rect x="3" y="6" width="11" height="1"/><rect x="3" y="9" width="11" height="1"/></g>
</g>
<!-- vgrid -->
<g transform="translate(252,115)">
<path d="M1,0 V13 H15" fill="none" stroke="#1830a0" stroke-width="2" shape-rendering="crispEdges"/>
<g fill="#3c68c8" shape-rendering="crispEdges"><rect x="4" y="2" width="1" height="10"/><rect x="8" y="2" width="1" height="10"/><rect x="12" y="2" width="1" height="10"/></g>
</g>
<!-- marker size 1 -->
<g transform="translate(289,115)" shape-rendering="crispEdges">
<rect x="0" y="10" width="4" height="4" fill="#202090"/><rect x="1" y="11" width="2" height="2" fill="#cc4420"/>
<rect x="4" y="5" width="6" height="6" fill="#202090"/><rect x="5" y="6" width="4" height="4" fill="#cc4420"/>
<rect x="8" y="0" width="7" height="7" fill="#202090"/><rect x="9" y="1" width="5" height="5" fill="#cc4420"/>
<path d="M1,4 L4.5,0.5 M2,0.5 H4.5 V3" fill="none" stroke="#202020" stroke-width="1" shape-rendering="auto"/>
</g>
<!-- marker size 2 -->
<g transform="translate(314,115)" shape-rendering="crispEdges">
<rect x="11" y="0" width="4" height="4" fill="#202090"/><rect x="12" y="1" width="2" height="2" fill="#cc4420"/>
<rect x="6" y="3" width="6" height="6" fill="#202090"/><rect x="7" y="4" width="4" height="4" fill="#cc4420"/>
<rect x="0" y="6" width="8" height="8" fill="#202090"/><rect x="1" y="7" width="6" height="6" fill="#cc4420"/>
<path d="M1,4 L4.5,0.5 M2,0.5 H4.5 V3" fill="none" stroke="#202020" stroke-width="1" shape-rendering="auto"/>
</g>
<use href="#dd" x="337" y="121" fill="#000" shape-rendering="crispEdges"/>
<!-- cube -->
<g transform="translate(362,116)">
<path d="M0.5,3.5 L3.5,0.5 H11.5 V9 L8.5,12 H0.5 Z" fill="#cc4420" stroke="#202090" stroke-width="1"/>
<path d="M0.5,3.5 H8.5 V12 M8.5,3.5 L11.5,0.5" fill="none" stroke="#202090" stroke-width="1"/>
</g>
<!-- speech bubble -->
<g transform="translate(387,116)">
<path d="M3,0.5 H9.5 Q12,0.5 12,3 V6 Q12,8.5 9.5,8.5 H5.5 L1,12 L3,8.5 Q0.5,8.5 0.5,6 V3 Q0.5,0.5 3,0.5 Z" fill="#cc4420" stroke="#202090" stroke-width="1"/>
<text x="3" y="7.2" font-family="'Liberation Sans',sans-serif" font-size="6.5" font-weight="bold" fill="#202090">13</text>
</g>
<!-- lines + tooltip -->
<g transform="translate(410,114)">
<path d="M0,8 L8,0" stroke="#c02020" stroke-width="1.3"/>
<path d="M0,10.5 L10,0.5" stroke="#202080" stroke-width="1.3"/>
<path d="M0.5,12.5 L12,1" stroke="#2070e0" stroke-width="1.3"/>
<path d="M2,13.5 L10,5.5" stroke="#20b0e0" stroke-width="1.3"/>
<path d="M2.5,15.5 L9,9" stroke="#30a030" stroke-width="1.3"/>
<path d="M7.5,4.5 H15.5 V9.5 H11.5 L9.5,12 V9.5 H7.5 Z" fill="#f8f060" stroke="#202020" stroke-width="1"/>
<text x="9" y="8.6" font-family="'Liberation Sans',sans-serif" font-size="5" font-weight="bold" fill="#202020">13</text>
</g>
<!-- chart type icons -->
<use href="#axL" x="448" y="113"/>
<g transform="translate(448,113)" shape-rendering="crispEdges">
<rect x="4" y="3" width="10" height="1" fill="#30a020"/><rect x="4" y="11" width="10" height="1" fill="#30a020"/><rect x="4" y="7" width="10" height="1" fill="#3050d0"/>
<g fill="#c02890"><rect x="5" y="5" width="1" height="1"/><rect x="8" y="5" width="1" height="1"/><rect x="11" y="5" width="1" height="1"/><rect x="5" y="9" width="1" height="1"/><rect x="8" y="9" width="1" height="1"/><rect x="11" y="9" width="1" height="1"/></g>
</g>
<use href="#axL" x="473" y="113"/>
<g transform="translate(473,113)" shape-rendering="crispEdges">
<rect x="4" y="8" width="2" height="5" fill="#283088"/><rect x="6" y="4" width="2" height="9" fill="#a030c0"/><rect x="8" y="2" width="1" height="11" fill="#283088"/><rect x="9" y="3" width="2" height="10" fill="#a030c0"/><rect x="11" y="6" width="2" height="7" fill="#283088"/>
</g>
<use href="#axL" x="498" y="113"/>
<g transform="translate(498,113)">
<path d="M3,12 L13,2" stroke="#209020" stroke-width="1.5"/>
<g fill="#182858"><rect x="4" y="10" width="2" height="2"/><rect x="7" y="8" width="2" height="2"/><rect x="9" y="5" width="2" height="2"/><rect x="12" y="2" width="2" height="2"/></g>
</g>
<use href="#axL" x="523" y="113"/>
<g transform="translate(523,113)">
<rect x="7" y="2" width="2" height="11" fill="#50a0f0"/>
<path d="M3.5,13 C5.5,13 6,2 8,2 C10,2 10.5,13 12.5,13" fill="none" stroke="#182868" stroke-width="1.2"/>
<path d="M4.5,2 V12 M11.5,2 V12" stroke="#30a020" stroke-width="1"/>
</g>
<use href="#axL" x="548" y="113"/>
<g transform="translate(548,113)" shape-rendering="crispEdges">
<rect x="4" y="2" width="10" height="1" fill="#30a020"/><rect x="4" y="11" width="10" height="1" fill="#30a020"/>
<rect x="6" y="5" width="6" height="1" fill="#283088"/><rect x="6" y="9" width="6" height="1" fill="#283088"/><rect x="6" y="5" width="1" height="5" fill="#283088"/><rect x="11" y="5" width="1" height="5" fill="#283088"/><rect x="6" y="7" width="6" height="1" fill="#283088"/>
<rect x="9" y="2" width="1" height="10" fill="#c030c0"/>
</g>
<use href="#axL" x="573" y="113"/>
<g transform="translate(573,113)">
<g fill="#283088" shape-rendering="crispEdges"><rect x="4" y="3" width="10" height="1"/><rect x="4" y="6" width="10" height="1"/><rect x="4" y="9" width="10" height="1"/><rect x="4" y="12" width="10" height="1"/><rect x="6" y="2" width="1" height="11"/><rect x="9" y="2" width="1" height="11"/><rect x="12" y="2" width="1" height="11"/></g>
<path d="M7,12 L11,2" stroke="#c030c0" stroke-width="1.2"/>
</g>
<!-- TITLE BAR -->
<g>
<path d="M9,9 H13 V7 H16 L17,8 H18.5 L19,11 H24 L25,12.5 V14 L23,16 L22,18.5 L21,19.5 L23,21 L25,23 H9 V21 L11,19 L10,17 V13 L9,12 Z" fill="#000"/>
<path d="M10.5,10 H13.5 L14,8 H15.5 L16.5,11 L17,18 L20,19 L20.5,20.5 L23,22.5 H10 L12,19.5 L11,17 V12.5 Z" fill="#922408"/>
<path d="M16,9 H18 L18.5,11.5 H22 L23.2,12.5 V14.5 L21.5,16.5 L20.5,18 H18 L17,16 Z" fill="#fff"/>
<g fill="#000" shape-rendering="crispEdges"><rect x="13" y="13" width="1" height="1"/><rect x="13" y="15" width="1" height="1"/><rect x="14" y="18" width="1" height="1"/><rect x="18" y="14" width="1" height="1"/><rect x="20" y="16" width="1" height="1"/><rect x="16" y="13" width="1" height="2"/><rect x="17" y="16" width="1" height="2"/></g>
<rect x="11" y="10" width="1" height="1" fill="#ff0000"/><rect x="10" y="11" width="1" height="1" fill="#c0c0e0"/><rect x="15" y="9" width="1" height="1" fill="#fff"/>
</g>
<g stroke="#fff" stroke-width="1" fill="none" shape-rendering="crispEdges">
<path d="M708,15.5 H718"/>
<rect x="753.5" y="10.5" width="9" height="9"/>
</g>
<path d="M799.5,10.5 L808.5,19.5 M808.5,10.5 L799.5,19.5" stroke="#fff" stroke-width="1.1" fill="none"/>
<!-- size grip -->
<g fill="#bfbfbf" shape-rendering="crispEdges"><rect x="823" y="610" width="2" height="2"/><rect x="820" y="613" width="2" height="2"/><rect x="823" y="613" width="2" height="2"/><rect x="817" y="616" width="2" height="2"/><rect x="820" y="616" width="2" height="2"/><rect x="823" y="616" width="2" height="2"/></g>
<!-- SIDEBAR ICONS -->
<!-- Kopfdaten -->
<g transform="translate(45,153)">
<rect x="0.5" y="4.5" width="11" height="10" fill="url(#gFrm)" stroke="#88a4dc" stroke-width="1"/>
<path d="M0.5,14.5 H11.5 V6" fill="none" stroke="#4c6498" stroke-width="1"/>
<path d="M2,10.5 H3.5 M5,10.5 H9.5 M2,12.5 H3.5 M5,12.5 H9.5" stroke="#98a0b8" stroke-width="1"/>
<path d="M2.5,7 L7,2.5 L10,6 L8.5,8.5 L5.5,5.5 L3.5,7.5 Z" fill="#f4d040" stroke="#c09818" stroke-width="0.6"/>
<path d="M7,1.8 C9,0.6 12.5,0.8 14,2.5 V5 C12.5,6.2 10.5,6 9.5,5 Z" fill="#f0c030" stroke="#b88810" stroke-width="0.6"/>
<rect x="14" y="1.5" width="2" height="6" fill="#30a030"/>
</g>
<!-- Dateneingabe -->
<g transform="translate(45,194)" shape-rendering="crispEdges">
<rect x="4" y="0" width="8" height="8" fill="#4c80ec"/>
<rect x="8" y="3" width="3" height="4" fill="#fff"/><rect x="9" y="4" width="1" height="1" fill="#283060"/><rect x="9" y="6" width="1" height="1" fill="#283060"/>
<rect x="5" y="1" width="4" height="1" fill="#a4c8ff"/>
<rect x="11" y="3" width="1" height="5" fill="#203070"/>
<rect x="0" y="3" width="8" height="8" fill="#4c80ec"/>
<rect x="1" y="4" width="4" height="1" fill="#a4c8ff"/>
<rect x="1" y="6" width="6" height="4" fill="#fff"/>
<rect x="2" y="7" width="1" height="1" fill="#406050"/><rect x="5" y="7" width="1" height="1" fill="#406050"/><rect x="2" y="9" width="1" height="1" fill="#283060"/><rect x="5" y="9" width="1" height="1" fill="#283060"/><rect x="3" y="8" width="2" height="2" fill="#fff"/>
<rect x="0" y="10" width="8" height="1" fill="#182858"/>
<g shape-rendering="auto">
<path d="M7.6,15 L15,7.6" stroke="#383838" stroke-width="3.2"/>
<path d="M7.2,14 L14,7.2" stroke="#f0c838" stroke-width="2.2"/>
<path d="M13,7.6 L15.2,5.4" stroke="#e05848" stroke-width="3"/>
<path d="M6,15.6 L6.6,13.4 L8.4,15 Z" fill="#fff"/>
</g>
</g>
<!-- Verfahren -->
<g transform="translate(45,235)" shape-rendering="crispEdges">
<rect x="0" y="0" width="16" height="15" fill="#4868c0"/><rect x="0" y="0" width="1" height="15" fill="#8ca4dc"/><rect x="0" y="0" width="10" height="1" fill="#8ca4dc"/>
<rect x="1" y="1" width="8" height="3" fill="#f4f6fc"/>
<rect x="1" y="4" width="8" height="1" fill="#a0a8c0"/>
<rect x="1" y="5" width="8" height="9" fill="#fff"/>
<rect x="2" y="6" width="5" height="1" fill="#a8b8e4"/><rect x="2" y="8" width="5" height="1" fill="#a8b8e4"/><rect x="2" y="10" width="5" height="1" fill="#a8b8e4"/><rect x="2" y="12" width="5" height="1" fill="#a8b8e4"/>
<rect x="10" y="0" width="6" height="4" fill="#404c68"/>
<path d="M10.5,1 H15.5 L13,3.6 Z" fill="#fff" shape-rendering="auto"/>
<rect x="10" y="5" width="5" height="4" fill="#e8ecf8"/><rect x="10" y="10" width="5" height="4" fill="#e8ecf8"/>
<path d="M10.8,8 L12.5,6 L14.2,8 Z" fill="#182858" shape-rendering="auto"/>
<path d="M10.8,11 L12.5,13 L14.2,11 Z" fill="#183828" shape-rendering="auto"/>
<rect x="0" y="14" width="16" height="1" fill="#203060"/><rect x="15" y="0" width="1" height="15" fill="#203060"/>
</g>
<!-- Report -->
<g transform="translate(45,276)" fill="#fff" stroke="#8ca0d0" stroke-width="1">
<path d="M0.5,0.5 H8.5 L9.5,1.5 V9.5 H1.5 L0.5,8.5 Z"/>
<path d="M2.5,2.5 H10.5 L11.5,3.5 V11.5 H3.5 L2.5,10.5 Z"/>
<path d="M4.5,4.5 H12.5 L13.5,5.5 V13.5 H5.5 L4.5,12.5 Z"/>
<rect x="6.5" y="6.5" width="8" height="8" fill="#f4f8ff"/>
<path d="M6.5,14.5 H14.5 V6.5" fill="none" stroke="#304878"/>
<path d="M8,8.5 H10 M11,8.5 H13 M8,10.5 H10 M11,10.5 H13 M8,12.5 H10 M11,12.5 H13" stroke="#8898d0"/>
</g>
<!-- Grafik -->
<g transform="translate(45,317)">
<defs>
<linearGradient id="gbB" x1="0" y1="0" x2="1" y2="0"><stop offset="0" stop-color="#1848c8"/><stop offset="0.5" stop-color="#60a0f8"/><stop offset="1" stop-color="#1840b0"/></linearGradient>
<linearGradient id="gbY" x1="0" y1="0" x2="0" y2="1"><stop offset="0" stop-color="#fff8b0"/><stop offset="0.4" stop-color="#f8e040"/><stop offset="1" stop-color="#e09010"/></linearGradient>
<linearGradient id="gbR" x1="0" y1="0" x2="1" y2="0"><stop offset="0" stop-color="#f87050"/><stop offset="0.6" stop-color="#e03818"/><stop offset="1" stop-color="#a02008"/></linearGradient>
</defs>
<path d="M0.5,3.5 L3.5,0.5 V5.5 M0.5,3.5 V14 L2,15.5 H13.5 L15.5,13" fill="none" stroke="#182048" stroke-width="1" stroke-dasharray="1.5,0.7"/>
<path d="M1.5,4 L3,2.5 V13 L1.5,14.5 Z" fill="#fff"/>
<rect x="2.5" y="6.5" width="3.5" height="7.5" fill="url(#gbB)"/>
<rect x="2.5" y="6.5" width="3.5" height="1.2" fill="#e8f0ff"/>
<rect x="6" y="1" width="4.5" height="13" fill="url(#gbY)"/>
<rect x="6" y="1" width="4.5" height="1" fill="#d0a840"/>
<rect x="10.5" y="3.5" width="4.5" height="10.5" fill="url(#gbR)"/>
</g>

<!--/ICONS-->
</svg>
<div class="lg" style="top:197px">Mittelwert</div>
<div class="lg" style="top:211px;letter-spacing:0.1px">Standardabweichung</div>
<div class="lg" style="top:225px;letter-spacing:0.25px">Messwerte</div>
</div>
</body>
</html>
